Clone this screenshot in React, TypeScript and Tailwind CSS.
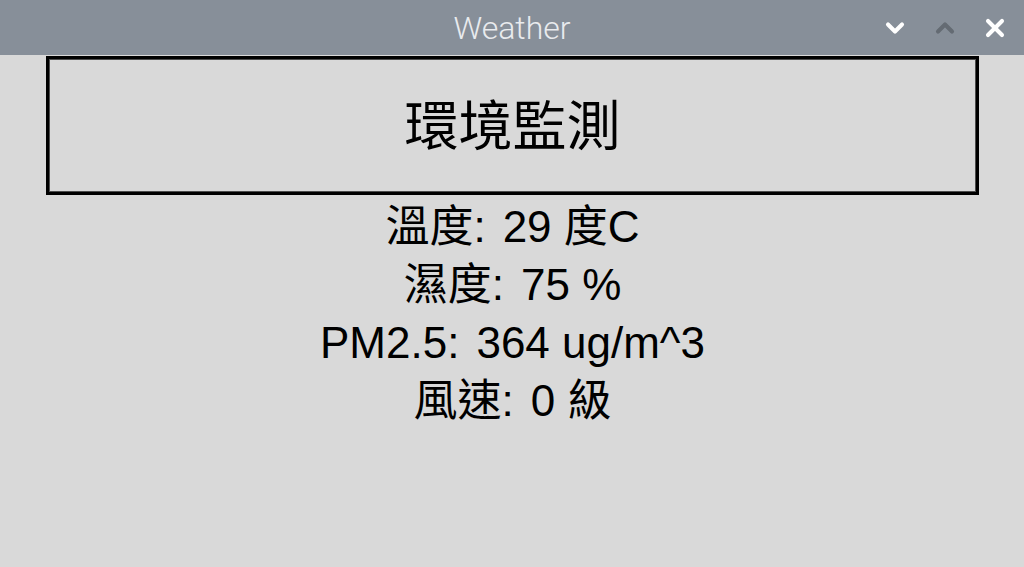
import { ChevronDown, ChevronUp, X } from 'lucide-react';

const readings = [
  { label: '溫度', value: '29 度C' },
  { label: '濕度', value: '75 %' },
  { label: 'PM2.5', value: '364 ug/m^3' },
  { label: '風速', value: '0 級' },
];

export default function App() {
  return (
    <div className="w-[1024px] h-[567px] flex flex-col bg-[#d9d9d9] overflow-hidden">
      {/* Title bar */}
      <div className="relative h-[55px] shrink-0 bg-[#878f99] flex items-center justify-center">
        <span className="text-[32px] font-light text-[#e9ebee] font-['Roboto',sans-serif] leading-none">
          Weather
        </span>
        <div className="absolute right-[15px] top-0 h-full flex items-center gap-[22px]">
          <ChevronDown className="w-7 h-7 text-white" strokeWidth={3.5} />
          <ChevronUp className="w-7 h-7 text-[#646b73]" strokeWidth={3.5} />
          <X className="w-7 h-7 text-white" strokeWidth={3.5} />
        </div>
      </div>

      {/* Content */}
      <div className="flex flex-col pt-px pr-[45px] pl-[46px] font-['Liberation_Sans','Noto_Sans_CJK_TC',sans-serif] text-black">
        <div className="h-[139px] pb-[6px] border-[3px] border-black shadow-[inset_0_0_0_1px_#4d4d4d] flex items-center justify-center">
          <h1 className="text-[54px] leading-none font-['Noto_Sans_CJK_TC',sans-serif]">環境監測</h1>
        </div>
        <div className="flex flex-col items-center pt-[3px]">
          {readings.map((r) => (
            <div key={r.label} className="h-[58px] flex items-center text-[44px] leading-none">
              <span>{r.label}:</span>
              <span className="ml-[17px]">{r.value}</span>
            </div>
          ))}
        </div>
      </div>
    </div>
  );
}
